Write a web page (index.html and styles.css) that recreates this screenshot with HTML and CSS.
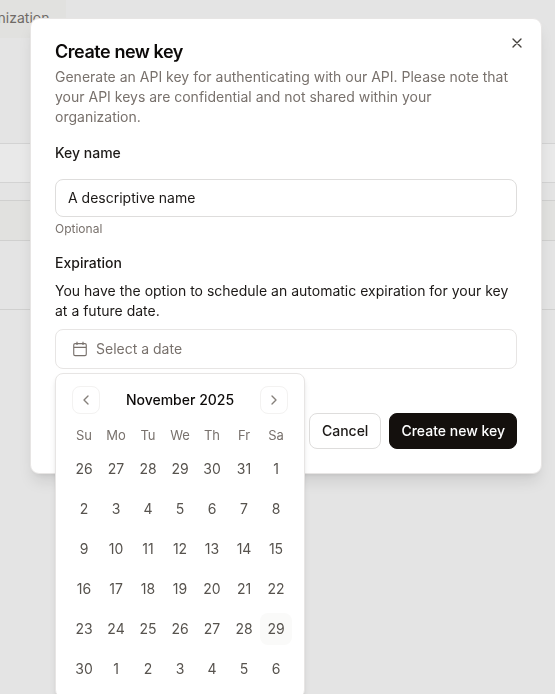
FILE: index.html
```
<!DOCTYPE html>
<html lang="en">
<head>
<meta charset="utf-8">
<title>Create new key</title>
<link rel="stylesheet" href="styles.css">
</head>
<body>
<div class="page">
  <div class="tab">nization</div>
  <div class="toolbar"></div>
  <div class="table-head"></div>
  <div class="table-row"></div>
</div>
<div class="overlay">
  <section class="dialog">
    <button class="close" aria-label="Close"><svg width="16" height="16" viewBox="0 0 24 24"><path d="M18 6 6 18M6 6l12 12"/></svg></button>
    <h2>Create new key</h2>
    <p class="description">Generate an API key for authenticating with our API. Please note that your API keys are confidential and not shared within your organization.</p>
    <div class="label name-label">Key name</div>
    <div class="field">A descriptive name</div>
    <div class="hint">Optional</div>
    <div class="label">Expiration</div>
    <p class="body-text">You have the option to schedule an automatic expiration for your key at a future date.</p>
    <div class="date-wrap">
      <div class="field date-field"><svg width="16" height="16" viewBox="0 0 24 24"><rect x="2.6" y="4" width="18.8" height="18" rx="2"/><path d="M7.5 1v5M16.5 1v5M3 9.5h18"/></svg>Select a date</div>
      <div class="calendar">
        <div class="cal-head">
          <button class="nav" aria-label="Previous month"><svg width="16" height="16" viewBox="0 0 24 24"><path d="m15 18-6-6 6-6"/></svg></button>
          <span class="month">November 2025</span>
          <button class="nav" aria-label="Next month"><svg width="16" height="16" viewBox="0 0 24 24"><path d="m9 18 6-6-6-6"/></svg></button>
        </div>
        <div class="weekdays"><span>Su</span><span>Mo</span><span>Tu</span><span>We</span><span>Th</span><span>Fr</span><span>Sa</span></div>
        <div class="days">
          <span>26</span><span>27</span><span>28</span><span>29</span><span>30</span><span>31</span><span>1</span>
          <span>2</span><span>3</span><span>4</span><span>5</span><span>6</span><span>7</span><span>8</span>
          <span>9</span><span>10</span><span>11</span><span>12</span><span>13</span><span>14</span><span>15</span>
          <span>16</span><span>17</span><span>18</span><span>19</span><span>20</span><span>21</span><span>22</span>
          <span>23</span><span>24</span><span>25</span><span>26</span><span>27</span><span>28</span><span class="today">29</span>
          <span>30</span><span>1</span><span>2</span><span>3</span><span>4</span><span>5</span><span>6</span>
        </div>
      </div>
    </div>
    <div class="actions"><button class="btn">Cancel</button><button class="btn primary">Create new key</button></div>
  </section>
</div>
</body>
</html>
```
FILE: styles.css
```
* { box-sizing: border-box; }
html, body { height: 100%; overflow: hidden; }
body { margin: 0; background: #e4e4e4; color: #1c1917; font: 14px/20px Inter, sans-serif; }
h2, p { margin: 0; }
button { padding: 0; font: inherit; color: inherit; }
svg { fill: none; stroke: currentColor; stroke-width: 2; stroke-linecap: round; stroke-linejoin: round; flex: none; }

.page { height: 694px; overflow: hidden; }
.tab { display: flex; justify-content: flex-end; width: 66px; height: 38px; padding: 8px 16.5px 0 0; background: #e1e1df; border-radius: 0 0 8px 0; color: #6f6a66; }
.toolbar { height: 40px; margin-top: 105px; background: #e9e9e9; border: solid #d3d3d3; border-width: 1px 0; }
.table-head { height: 41px; margin-top: 17px; background: #e1e1df; border: solid #d0d0cf; border-width: 1px 0; }
.table-row { height: 69px; border-bottom: 1px solid #d0d0cf; }

.overlay { position: fixed; inset: 0; padding: 18px 13px 0 30px; }
.dialog { position: relative; height: 456px; padding: 22px 24px 24px; background: #fff; border: 1px solid #e7e5e4; border-radius: 9px; box-shadow: 0 10px 15px -3px rgb(0 0 0 / .1), 0 4px 6px -4px rgb(0 0 0 / .1); }
.close { position: absolute; top: 16px; right: 16px; display: flex; border: 0; background: none; color: #44403c; }
h2 { font-size: 18px; line-height: 22px; font-weight: 600; letter-spacing: -.45px; color: #0c0a09; }
.description { margin-top: 4px; color: #78716c; }
.label { font-weight: 500; }
.name-label { margin-top: 16px; }
.field { height: 38px; padding: 8px 12px; border: 1px solid #dedddc; border-radius: 8px; }
.name-label + .field { margin-top: 16px; }
.hint { margin: 4px 0 16px; font-size: 12px; line-height: 16px; color: #78716c; padding-bottom: 2px; }
.hint + .label { margin-top: -2px; }
.body-text { margin-top: 8px; }
.date-wrap { position: relative; margin-top: 8px; }
.date-field { display: flex; align-items: center; gap: 8px; height: 40px; padding: 0 16px; border-color: #e7e5e4; color: #78716c; }
.date-field svg { stroke-width: 1.7; }
.date-field path { stroke-linecap: butt; }

.calendar { position: absolute; top: 44px; left: 0; z-index: 1; width: 250px; padding: 12px; background: #fff; border: 1px solid #e7e5e4; border-radius: 8px; box-shadow: 0 4px 6px -1px rgb(0 0 0 / .1), 0 2px 4px -2px rgb(0 0 0 / .1); }
.cal-head { display: flex; align-items: center; justify-content: space-between; height: 28px; padding: 0 4px; }
.month { font-weight: 500; color: #0c0a09; }
.nav { display: flex; align-items: center; justify-content: center; width: 28px; height: 28px; border: 1px solid #f3f2f1; border-radius: 8px; background: #fff; color: #857f7a; }
.weekdays, .days { display: grid; grid-template-columns: repeat(7, 32px); text-align: center; }
.weekdays { margin-top: 12px; font-size: 13px; line-height: 19px; color: #78716c; }
.days { gap: 8px 0; margin-top: 8px; color: #57534e; line-height: 32px; }
.today { border-radius: 8px; background: #fafaf9; }

.actions { display: flex; justify-content: flex-end; gap: 8px; margin-top: 44px; }
.btn { height: 36px; padding: 0 12px; border: 1px solid #dedddc; border-radius: 8px; background: #fff; font-weight: 500; }
.primary { border-color: #14100d; background: #14100d; color: #fff; padding: 0 11px; }
```
